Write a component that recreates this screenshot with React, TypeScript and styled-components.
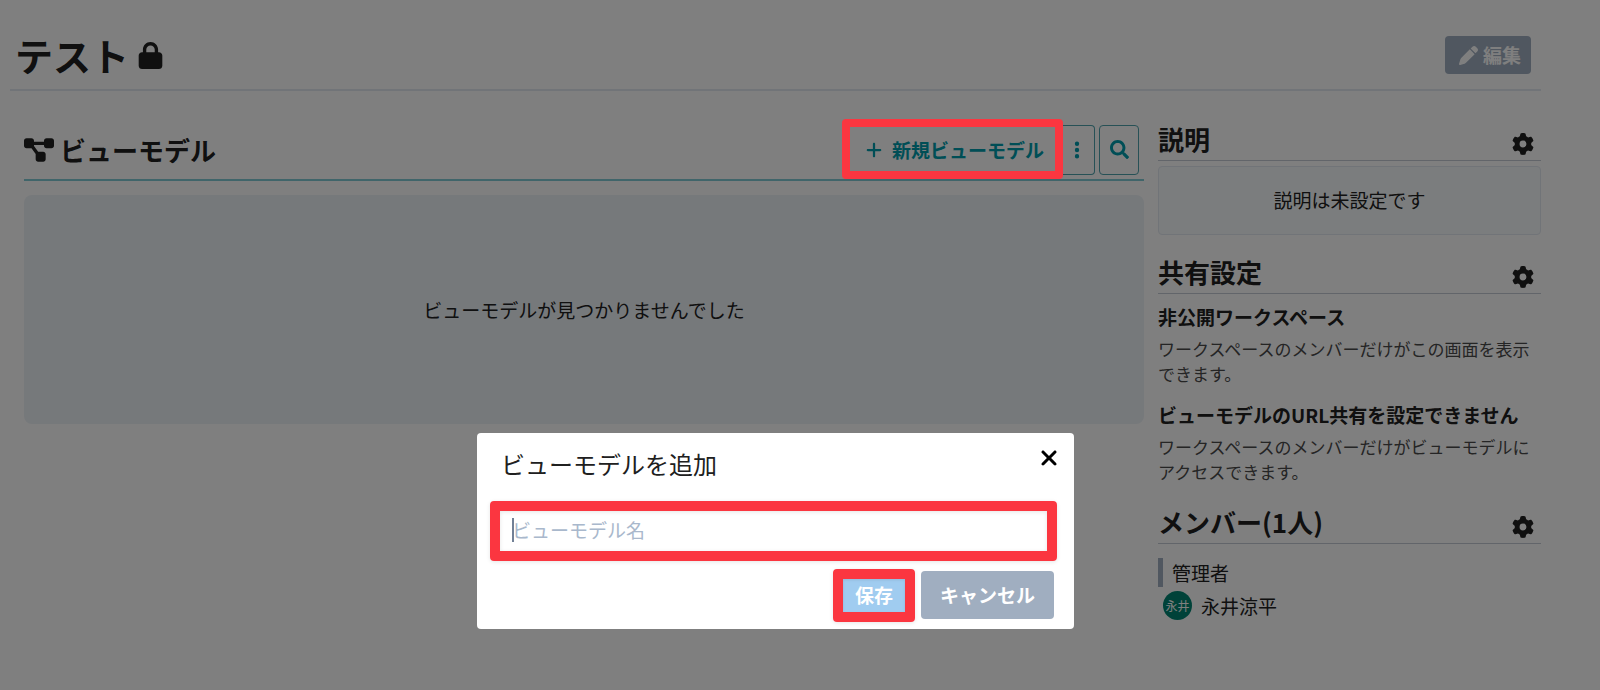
import React from "react";
import styled, { createGlobalStyle, css } from "styled-components";
import { FaSearch } from "react-icons/fa";
import {
  FaDiagramProject,
  FaEllipsisVertical,
  FaGear,
  FaLock,
  FaPen,
  FaPlus,
  FaXmark,
} from "react-icons/fa6";

const GlobalStyle = createGlobalStyle`
  *, *::before, *::after { box-sizing: border-box; }
  body {
    margin: 0;
    background: #ffffff;
    color: #202020;
    font-family: "Noto Sans CJK JP", sans-serif;
    font-size: 19px;
    line-height: 28px;
  }
  h1, h2, h3, p, ul { margin: 0; padding: 0; }
  button, input { font: inherit; color: inherit; }
  svg { display: block; flex: none; }
`;

const Page = styled.div`
  min-height: 100vh;
  padding: 21px 59px 40px 10px;
`;

const PageHeader = styled.header`
  display: flex;
  align-items: center;
  justify-content: space-between;
  height: 70px;
  padding: 0 10px 0 5px;
  border-bottom: 2px solid #e2e8f0;
`;

const PageTitle = styled.h1`
  display: flex;
  align-items: center;
  gap: 8px;
  font-size: 38px;
  line-height: 48px;
  font-weight: 700;
`;

const EditButton = styled.button`
  display: flex;
  align-items: center;
  gap: 5px;
  height: 38px;
  padding: 0 10px 0 14px;
  border: 0;
  border-radius: 4px;
  background: #a0aec0;
  color: #ffffff;
  font-weight: 700;
`;

const Columns = styled.div`
  display: grid;
  grid-template-columns: minmax(0, 1fr) 383px;
  gap: 14px;
  align-items: start;
  padding: 34px 0 0 14px;
`;

const ModelHeader = styled.div`
  display: flex;
  align-items: center;
  justify-content: space-between;
  height: 56px;
  padding: 0 5px 5px 0;
  border-bottom: 2px solid #81cbd5;
`;

const SectionTitle = styled.h2`
  display: flex;
  align-items: center;
  gap: 6px;
  font-size: 26px;
  line-height: 36px;
  font-weight: 700;
`;

const Toolbar = styled.div`
  display: flex;
  gap: 4px;
`;

const ButtonGroup = styled.div`
  display: flex;
`;

const Highlight = css<{ $weight: number }>`
  content: "";
  position: absolute;
  border: ${(p) => p.$weight}px solid #fb3640;
  border-radius: 4px;
  pointer-events: none;
  z-index: 20;
`;

const ToolButton = styled.button<{ $side?: "left" | "right" }>`
  display: flex;
  align-items: center;
  justify-content: center;
  height: 50px;
  width: ${(p) => (p.$side === "right" ? 36 : 40)}px;
  padding: 0;
  border: 1px solid #4fa3ad;
  border-left-width: ${(p) => (p.$side === "right" ? 0 : 1)}px;
  border-radius: ${(p) =>
    p.$side === "left" ? "4px 0 0 4px" : p.$side === "right" ? "0 4px 4px 0" : "4px"};
  background: transparent;
  color: #009cac;
  font-weight: 700;
`;

const NewModelButton = styled(ToolButton)<{ $weight: number }>`
  position: relative;
  gap: 9px;
  width: auto;
  padding: 0 14px 0 18px;
  &::after {
    ${Highlight}
    inset: -7px -5px -5px;
  }
`;

const EmptyPanel = styled.div`
  display: flex;
  align-items: center;
  justify-content: center;
  height: 229px;
  margin-top: 14px;
  border-radius: 8px;
  background: #edf2f7;
`;

const Sidebar = styled.aside`
  display: flex;
  flex-direction: column;
`;

const SideHeader = styled.div`
  display: flex;
  align-items: center;
  justify-content: space-between;
  height: 36px;
  padding: 0 7px 7px 0;
  border-bottom: 1px solid #c4cad4;
`;

const IconButton = styled.button`
  display: flex;
  margin: 0;
  padding: 0;
  border: 0;
  background: transparent;
`;

const GearButton = styled(IconButton)`
  padding-top: 10px;
`;

const DescriptionBox = styled.p`
  margin: 5px 0 23px;
  padding: 19px 20px 20px;
  border: 1px solid #e2e8f0;
  border-radius: 4px;
  background: #f7fafc;
  text-align: center;
`;

const ShareItem = styled.div`
  padding-top: 9px;
  & + & { padding-top: 15px; }
`;

const ShareTitle = styled.h3`
  font-size: 19px;
  line-height: 28px;
  font-weight: 700;
`;

const ShareText = styled.p`
  margin-top: 5px;
  color: #4a4a4a;
  font-size: 17px;
  line-height: 25px;
`;

const MemberHeader = styled(SideHeader)`
  margin-top: 24px;
`;

const Role = styled.h3`
  margin-top: 14px;
  padding-left: 9px;
  border-left: 5px solid #a0aec0;
  font-size: 19px;
  line-height: 29px;
  font-weight: 400;
`;

const Member = styled.div`
  display: flex;
  align-items: center;
  gap: 9px;
  padding: 4px 0 0 5px;
`;

const Avatar = styled.span`
  display: flex;
  align-items: center;
  justify-content: center;
  width: 29px;
  height: 29px;
  border-radius: 50%;
  background: #008573;
  color: #ffffff;
  font-size: 12px;
`;

const Overlay = styled.div`
  position: fixed;
  inset: 0;
  z-index: 10;
  display: flex;
  align-items: flex-end;
  justify-content: center;
  padding: 0 49px 61px 0;
  background: rgba(0, 0, 0, 0.5);
`;

const Dialog = styled.form`
  width: 597px;
  max-width: 100%;
  padding: 13px 17px 10px 13px;
  border-radius: 4px;
  background: #ffffff;
`;

const DialogHeader = styled.div`
  display: flex;
  align-items: flex-start;
  justify-content: space-between;
  padding-left: 11px;
`;

const DialogTitle = styled.h2`
  font-size: 24px;
  line-height: 36px;
  font-weight: 400;
`;

const CloseButton = styled(IconButton)`
  margin-right: -4px;
  color: #000000;
`;

const Field = styled.div<{ $weight: number }>`
  position: relative;
  height: 60px;
  margin-top: 19px;
  padding: 8px;
  &::after {
    ${Highlight}
    inset: 0;
    box-shadow: 0 1px 4px rgba(0, 0, 0, 0.1), inset 0 1px 4px rgba(0, 0, 0, 0.1);
  }
`;

const Caret = styled.span`
  position: absolute;
  left: 22px;
  top: 17px;
  width: 2px;
  height: 24px;
  background: #718096;
`;

const NameInput = styled.input`
  display: block;
  width: 100%;
  height: 40px;
  padding: 0 14px;
  border: 0;
  outline: 0;
  background: #ffffff;
  &::placeholder { color: #a9b8cc; opacity: 1; }
`;

const DialogActions = styled.div`
  display: flex;
  justify-content: flex-end;
  gap: 9px;
  margin-top: 10px;
  padding-right: 3px;
`;

const ActionButton = styled.button`
  height: 48px;
  padding: 0 19px;
  border: 0;
  border-radius: 4px;
  background: #a0aec0;
  color: #ffffff;
  font-weight: 700;
`;

const SaveButton = styled(ActionButton)<{ $weight: number }>`
  position: relative;
  background: #a0ccf0;
  &::after {
    ${Highlight}
    inset: -2px -3px -3px;
    box-shadow: 0 1px 4px rgba(0, 0, 0, 0.1), inset 0 1px 3px rgba(0, 0, 0, 0.1);
  }
`;

function Gear({ label }: { label: string }) {
  return (
    <GearButton type="button" aria-label={label}>
      <FaGear size={22} />
    </GearButton>
  );
}

export default function App() {
  return (
    <>
      <GlobalStyle />
      <Page>
        <PageHeader>
          <PageTitle>
            テスト
            <FaLock size={27} />
          </PageTitle>
          <EditButton type="button">
            <FaPen size={19} />
            編集
          </EditButton>
        </PageHeader>
        <Columns>
          <main>
            <ModelHeader>
              <SectionTitle>
                <FaDiagramProject size={30} />
                ビューモデル
              </SectionTitle>
              <Toolbar>
                <ButtonGroup>
                  <NewModelButton type="button" $side="left" $weight={8}>
                    <FaPlus size={18} />
                    新規ビューモデル
                  </NewModelButton>
                  <ToolButton type="button" $side="right" aria-label="メニュー">
                    <FaEllipsisVertical size={20} />
                  </ToolButton>
                </ButtonGroup>
                <ToolButton type="button" aria-label="検索">
                  <FaSearch size={19} />
                </ToolButton>
              </Toolbar>
            </ModelHeader>
            <EmptyPanel>ビューモデルが見つかりませんでした</EmptyPanel>
          </main>
          <Sidebar>
            <SideHeader>
              <SectionTitle>説明</SectionTitle>
              <Gear label="説明の設定" />
            </SideHeader>
            <DescriptionBox>説明は未設定です</DescriptionBox>
            <SideHeader>
              <SectionTitle>共有設定</SectionTitle>
              <Gear label="共有の設定" />
            </SideHeader>
            <ShareItem>
              <ShareTitle>非公開ワークスペース</ShareTitle>
              <ShareText>ワークスペースのメンバーだけがこの画面を表示できます。</ShareText>
            </ShareItem>
            <ShareItem>
              <ShareTitle>ビューモデルのURL共有を設定できません</ShareTitle>
              <ShareText>ワークスペースのメンバーだけがビューモデルにアクセスできます。</ShareText>
            </ShareItem>
            <MemberHeader>
              <SectionTitle>メンバー(1人)</SectionTitle>
              <Gear label="メンバーの設定" />
            </MemberHeader>
            <Role>管理者</Role>
            <Member>
              <Avatar>永井</Avatar>
              永井涼平
            </Member>
          </Sidebar>
        </Columns>
      </Page>
      <Overlay>
        <Dialog role="dialog" aria-labelledby="dialog-title" onSubmit={(e) => e.preventDefault()}>
          <DialogHeader>
            <DialogTitle id="dialog-title">ビューモデルを追加</DialogTitle>
            <CloseButton type="button" aria-label="閉じる">
              <FaXmark size={24} />
            </CloseButton>
          </DialogHeader>
          <Field $weight={10}>
            <NameInput type="text" aria-label="ビューモデル名" placeholder="ビューモデル名" />
            <Caret />
          </Field>
          <DialogActions>
            <SaveButton type="submit" $weight={10}>
              保存
            </SaveButton>
            <ActionButton type="button">キャンセル</ActionButton>
          </DialogActions>
        </Dialog>
      </Overlay>
    </>
  );
}
